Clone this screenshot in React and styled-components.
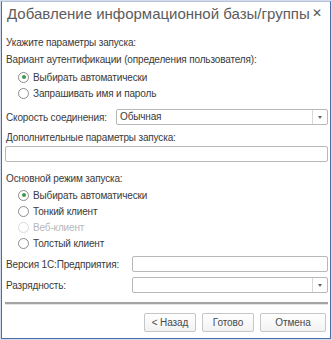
import React from "react";
import styled, { createGlobalStyle } from "styled-components";

const Global = createGlobalStyle`
  html, body { margin: 0; padding: 0; background: #fff; }
  body { font-family: "Liberation Sans", Arial, sans-serif; }
  * { box-sizing: border-box; }
`;

const Frame = styled.div`
  width: 332px;
  height: 340px;
  border: 1px solid #d3dceb;
  background: #fff;
`;

const Window = styled.div`
  height: 100%;
  border: 1px solid #4a6da3;
  border-top-color: #b4c3da;
  display: flex;
  flex-direction: column;
  background: #fff;
`;

const TitleBar = styled.div`
  height: 22px;
  flex: none;
  display: flex;
  align-items: center;
  justify-content: space-between;
  padding: 0 8px 0 5px;
  font-family: "Liberation Sans", Arial, sans-serif;
  font-size: 15px;
  color: #5c5c5c;
  white-space: nowrap;
`;

const Close = styled.span`
  font-size: 12px;
  color: #555;
  font-family: "DejaVu Sans", sans-serif;
`;

const Body = styled.div`
  flex: 1;
  display: flex;
  flex-direction: column;
  padding: 11px 2px 0 3px;
  font-size: 10px;
  letter-spacing: -0.15px;
  color: #3a3a3a;
`;

const Label = styled.div`
  height: 16px;
  line-height: 16px;
  padding-left: 1px;
  margin-top: ${(p) => p.$mt || 0}px;
  white-space: nowrap;
`;

const RadioRow = styled.div`
  display: flex;
  align-items: center;
  height: 16px;
  margin-top: ${(p) => p.$mt || 0}px;
  padding-left: 13px;
  gap: 4px;
  white-space: nowrap;
  color: ${(p) => (p.$disabled ? "#b8b8b8" : "#3a3a3a")};
`;

const Circle = styled.span`
  flex: none;
  width: 11px;
  height: 11px;
  border-radius: 50%;
  border: 1px solid ${(p) => (p.$disabled ? "#dadada" : "#8c8c8c")};
  display: inline-flex;
  align-items: center;
  justify-content: center;
  background: #fff;
  &::after {
    content: "";
    width: 4px;
    height: 4px;
    border-radius: 50%;
    background: ${(p) => (p.$checked ? "#3b9a4a" : "transparent")};
  }
`;

const FieldRow = styled.div`
  display: flex;
  align-items: center;
  margin-top: ${(p) => p.$mt || 0}px;
  height: 16px;
`;

const FieldLabel = styled.div`
  width: ${(p) => p.$w}px;
  padding-left: 1px;
  flex: none;
  white-space: nowrap;
`;

const Box = styled.div`
  flex: 1;
  height: 16px;
  border: 1px solid #b8b8b8;
  border-radius: 2px;
  display: flex;
  align-items: stretch;
  background: #fff;
`;

const BoxText = styled.div`
  flex: 1;
  padding-left: 3px;
  line-height: 14px;
  color: #3a3a3a;
`;

const DropBtn = styled.div`
  width: 15px;
  border-left: 1px solid #d8d8d8;
  display: flex;
  align-items: center;
  justify-content: center;
  &::after {
    content: "";
    border-left: 2.5px solid transparent;
    border-right: 2.5px solid transparent;
    border-top: 3px solid #666;
  }
`;

const WideBox = styled(Box)`
  flex: none;
`;

const Separator = styled.div`
  height: 3px;
  flex: none;
  background: #a3a3a3;
  border-bottom: 1px solid #e4e4e4;
  margin-top: 9px;
`;

const Buttons = styled.div`
  display: flex;
  justify-content: flex-end;
  gap: 6px;
  padding: 8px 2px 0 0;
`;

const Button = styled.button`
  width: ${(p) => p.$w || 52}px;
  height: 19px;
  border: 1px solid #c6c6c6;
  border-radius: 2px;
  background: linear-gradient(#ffffff, #f2f2f2);
  font-family: "Liberation Sans", Arial, sans-serif;
  font-size: 10px;
  letter-spacing: -0.1px;
  color: #4a4a4a;
  padding: 0;
`;

function Radio({ checked, disabled, mt, children }) {
  return (
    <RadioRow $disabled={disabled} $mt={mt}>
      <Circle $checked={checked} $disabled={disabled} />
      {children}
    </RadioRow>
  );
}

export default function App() {
  return (
    <>
      <Global />
      <Frame>
        <Window>
          <TitleBar>
            <span>Добавление информационной базы/группы</span>
            <Close>✕</Close>
          </TitleBar>
          <Body>
            <Label>Укажите параметры запуска:</Label>
            <Label $mt={1}>Вариант аутентификации (определения пользователя):</Label>
            <Radio checked mt={1}>Выбирать автоматически</Radio>
            <Radio>Запрашивать имя и пароль</Radio>
            <FieldRow $mt={8}>
              <FieldLabel $w={111}>Скорость соединения:</FieldLabel>
              <Box>
                <BoxText>Обычная</BoxText>
                <DropBtn />
              </Box>
            </FieldRow>
            <Label $mt={5}>Дополнительные параметры запуска:</Label>
            <WideBox />
            <Label $mt={9}>Основной режим запуска:</Label>
            <Radio checked>Выбирать автоматически</Radio>
            <Radio>Тонкий клиент</Radio>
            <Radio disabled>Веб-клиент</Radio>
            <Radio>Толстый клиент</Radio>
            <FieldRow $mt={5}>
              <FieldLabel $w={127}>Версия 1С:Предприятия:</FieldLabel>
              <Box />
            </FieldRow>
            <FieldRow $mt={5}>
              <FieldLabel $w={127}>Разрядность:</FieldLabel>
              <Box>
                <BoxText />
                <DropBtn />
              </Box>
            </FieldRow>
            <Separator />
            <Buttons>
              <Button $w={52}>&lt; Назад</Button>
              <Button $w={52}>Готово</Button>
              <Button $w={66}>Отмена</Button>
            </Buttons>
          </Body>
        </Window>
      </Frame>
    </>
  );
}
